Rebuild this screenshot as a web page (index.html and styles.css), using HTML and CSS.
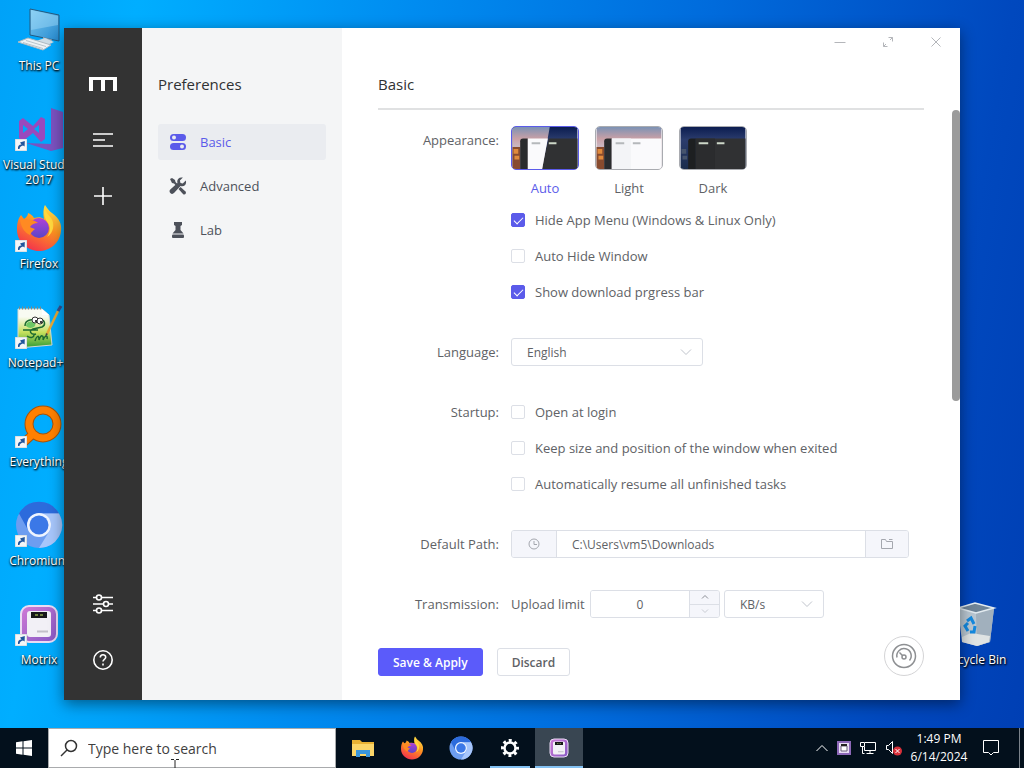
FILE: index.html
```html
<!doctype html>
<html lang="en">
  <head>
    <meta charset="UTF-8" />
    <meta name="viewport" content="width=device-width, initial-scale=1.0" />
    <title>Motrix - Preferences</title>
    <link rel="stylesheet" href="styles.css">
  </head>
  <body>
    <!-- shared icons -->
    <svg class="sprite" width="0" height="0" aria-hidden="true">
      <defs>
        <linearGradient id="g-fox" x1="0.8" y1="0" x2="0.3" y2="1">
          <stop offset="0" stop-color="#ffe84a" />
          <stop offset="0.45" stop-color="#ff9420" />
          <stop offset="1" stop-color="#f2304e" />
        </linearGradient>
        <linearGradient id="g-globe" x1="0" y1="0" x2="0" y2="1">
          <stop offset="0" stop-color="#b040d8" />
          <stop offset="1" stop-color="#5a45c8" />
        </linearGradient>
        <linearGradient id="g-screen" x1="0" y1="0" x2="1" y2="1">
          <stop offset="0" stop-color="#7ccaf2" />
          <stop offset="1" stop-color="#2489cf" />
        </linearGradient>
        <linearGradient id="g-motrix" x1="0" y1="0" x2="1" y2="1">
          <stop offset="0" stop-color="#d17ad6" />
          <stop offset="1" stop-color="#8558c4" />
        </linearGradient>
        <linearGradient id="g-note" x1="0" y1="0" x2="0" y2="1">
          <stop offset="0.2" stop-color="#f8fbf2" />
          <stop offset="0.6" stop-color="#c5e05c" />
          <stop offset="1" stop-color="#2e9a35" />
        </linearGradient>
        <linearGradient id="g-day" x1="0" y1="0" x2="0" y2="1">
          <stop offset="0" stop-color="#7c92b4" />
          <stop offset="0.28" stop-color="#c9a0a6" />
          <stop offset="0.45" stop-color="#cbb6c0" />
          <stop offset="0.6" stop-color="#b8a9b4" />
        </linearGradient>
        <linearGradient id="g-night" x1="0" y1="0" x2="0" y2="1">
          <stop offset="0" stop-color="#0c1d50" />
          <stop offset="0.3" stop-color="#2b3c6d" />
          <stop offset="1" stop-color="#1a2c4c" />
        </linearGradient>
      </defs>
      <symbol id="shortcut" viewBox="0 0 12 12">
        <rect width="12" height="12" fill="#f4f6f8" stroke="#c5ccd2" />
        <path d="M3 10C2.500 7 4 5.500 6.500 5.500L5 3.500 9.800 2 9.600 7.500 8 6.500C6 7 4.500 8 4.500 10Z" fill="#21559c" />
      </symbol>
      <symbol id="firefox" viewBox="0 0 48 48">
        <path d="M30 1c3 4 4 6 7 8 7 5 10 11 9 18-1 12-11 20-22 20S2 38 2 26C2 19 3 15 6 11l3 4c3-2 4-4 4-6 3 1 5 3 6 5 4-1 7-1 10 1-1-5-1-10 1-14z" fill="url(#g-fox)" />
        <circle cx="24" cy="24" r="10" fill="url(#g-globe)" />
        <path d="M5 13c5 4 12 1 18 6-4 0-7 2-8 4 1 1 3 1 5 2-2 2-4 3-5 6-5-2-10-8-10-18z" fill="#ff8a22" />
        <path d="M30 1c-2 7-1 13 3 18 3 4 2 10-1 14 7-4 8-14 4-19-3-4-6-6-6-13z" fill="#ffd83e" />
      </symbol>
      <symbol id="chromium" viewBox="0 0 48 48">
        <circle cx="24" cy="24" r="23" fill="#6d9df0" />
        <path d="M4 12.500A23 23 0 0 1 44 12.500H24A12 12 0 0 0 13.600 30z" fill="#2c6bdc" />
        <path d="M44 12.500A23 23 0 0 1 24 47l10.500-17A12 12 0 0 0 24 12.500z" fill="#a7c6fb" />
        <circle cx="24" cy="24" r="12" fill="#eef4ff" />
        <circle cx="24" cy="24" r="9.500" fill="#3b78e7" />
      </symbol>
      <symbol id="motrix" viewBox="0 0 48 48">
        <rect x="6" y="6" width="36" height="36" rx="8" fill="url(#g-motrix)" stroke="#eadcf4" stroke-width="2" />
        <rect x="12" y="11" width="24" height="26" rx="3" fill="#f2f0f6" />
        <rect x="16" y="12" width="16" height="6" fill="#17181a" />
        <path d="M20 15h3M25 15h3" stroke="#8ca24a" stroke-width="1.500" />
        <path d="M22 31.500h11" stroke="#c2bfc9" stroke-width="2" />
      </symbol>
      <symbol id="chevron-down" viewBox="0 0 12 12">
        <path d="M1 3.500l5 5 5-5" fill="none" stroke="#c0c4cc" />
      </symbol>
    </svg>

    <div class="desktop">
      <div class="shortcut">
        <svg class="shortcut-icon" viewBox="0 0 48 48">
          <path d="M15 3l29 6v26l-29-6z" fill="url(#g-screen)" stroke="#24597f" />
          <path d="M16 4l27 6v9L16 24z" fill="#a5dbf8" opacity="0.45" />
          <path d="M28 31l9 2.500v4l-9-2z" fill="#8aa5b8" />
          <path d="M21 35l9-3 9 4-9 4z" fill="#cfdde6" />
          <path d="M3 36l10-4 23 7-8 5z" fill="#eef2f5" stroke="#aebac2" />
          <path d="M8 36.500l20 6M11 34.500l20 6" stroke="#b9c4cb" />
        </svg>
        <span>This PC</span>
      </div>
      <div class="shortcut">
        <svg class="shortcut-icon" viewBox="0 0 48 48">
          <path d="M36 3l12 4v36l-12 3-25-8 25 1z" fill="#7b52c0" />
          <path d="M4 16l4-3 10 8 8-9 4 2v20l-4 3-8-9-10 8-4-3zm4 4v8l5-4zm16 0l-5 4 5 4z" fill="#9a49bd" fill-rule="evenodd" />
          <use href="#shortcut" y="34" width="12" height="12" />
        </svg>
        <span>Visual Studio 2017</span>
      </div>
      <div class="shortcut">
        <svg class="shortcut-icon" viewBox="0 0 48 48">
          <use href="#firefox" width="48" height="48" />
          <use href="#shortcut" y="36" width="12" height="12" />
        </svg>
        <span>Firefox</span>
      </div>
      <div class="shortcut">
        <svg class="shortcut-icon" viewBox="0 0 48 48">
          <path d="M3 6h24l7 6 3 30-34 3z" fill="url(#g-note)" stroke="#d5dad2" />
          <path d="M4 5h23" stroke="#7f8a88" stroke-width="3" stroke-dasharray="1 2" />
          <path d="M27 6v6h7z" fill="#fff" />
          <path d="M10 23c0-6 7-8 12-4l4-2c4 0 5 5 1 7l-9 2c-5 2-2 6 3 5M8 27h15M12 33c4 3 7 1 7-1M20 38c2-6 4-6 4-1 2-6 5-5 4 0 2-5 5-5 4-1" fill="none" stroke="#1c6a30" stroke-width="1.500" />
          <path d="M11 23c0-4 5-6 9-3 2 4-5 7-9 3z" fill="#6cc865" />
          <circle cx="20" cy="17" r="3" fill="#fff" stroke="#333" />
          <circle cx="25" cy="18" r="3" fill="#fff" stroke="#333" />
          <circle cx="21" cy="18" r="1" /><circle cx="26" cy="19" r="1" />
          <path d="M32 31l11-23" stroke="#e6a735" stroke-width="2.500" />
          <path d="M43 8l3-5" stroke="#3b4f8c" stroke-width="3" />
          <path d="M30 34l1-4 2 1z" fill="#444" />
          <use href="#shortcut" y="34" width="12" height="12" />
        </svg>
        <span>Notepad++</span>
      </div>
      <div class="shortcut">
        <svg class="shortcut-icon" viewBox="0 0 48 48">
          <path d="M17 33L6 43" stroke="#a6530a" stroke-width="9" />
          <circle cx="28" cy="22" r="14" fill="none" stroke="#a6530a" stroke-width="9" />
          <path d="M18 32L6 43" stroke="#ff8000" stroke-width="7" />
          <circle cx="28" cy="22" r="14" fill="none" stroke="#ff8000" stroke-width="7" />
          <use href="#shortcut" y="34" width="12" height="12" />
        </svg>
        <span>Everything</span>
      </div>
      <div class="shortcut">
        <svg class="shortcut-icon" viewBox="0 0 48 48">
          <use href="#chromium" width="48" height="48" />
          <use href="#shortcut" y="34" width="12" height="12" />
        </svg>
        <span>Chromium</span>
      </div>
      <div class="shortcut">
        <svg class="shortcut-icon" viewBox="0 0 48 48">
          <use href="#motrix" width="48" height="48" />
          <use href="#shortcut" y="34" width="12" height="12" />
        </svg>
        <span>Motrix</span>
      </div>
      <div class="shortcut recycle">
        <svg class="shortcut-icon" viewBox="0 0 48 48">
          <path d="M7 8l17-5 19 5-4 34-13 4-15-4z" fill="#b9c7d2" />
          <path d="M25 13l18-5-4 34-13 4z" fill="#a1b0bd" />
          <path d="M7 8l17-5 19 5-18 5z" fill="#6f8497" stroke="#e3ebf0" stroke-width="1.500" />
          <path d="M11 37l9-4 19 3-1 6-12 4-15-4z" fill="#dfe3e3" />
          <path d="M16 21l4-3 3 6M24 26l-1 6h-4M17 31l-3-5 3-3" fill="none" stroke="#1489df" stroke-width="3" />
        </svg>
        <span>Recycle Bin</span>
      </div>

      <main class="window">
        <nav class="aside" aria-label="Main">
          <svg class="logo" width="28" height="14" viewBox="0 0 28 14"><path d="M0 0h28v14h-4V3h-8v11h-4V3H4v11H0z" fill="#fff" /></svg>
          <button class="aside-btn" aria-label="Tasks">
            <svg width="24" height="24" viewBox="0 0 24 24"><path d="M2 6h20M2 12h12M2 18h20" /></svg>
          </button>
          <button class="aside-btn" aria-label="Add task">
            <svg width="24" height="24" viewBox="0 0 24 24"><path d="M3 12h18M12 3v18" /></svg>
          </button>
          <div class="aside-bottom">
            <button class="aside-btn" aria-label="Preferences">
              <svg width="24" height="24" viewBox="0 0 24 24"><path d="M2 5.500h3M11 5.500h11M2 12h10M18 12h4M2 18.500h3M11 18.500h11" /><circle cx="8" cy="5.500" r="2.500" /><circle cx="15" cy="12" r="2.500" /><circle cx="8" cy="18.500" r="2.500" /></svg>
            </button>
            <button class="aside-btn" aria-label="Help">
              <svg width="24" height="24" viewBox="0 0 24 24"><circle cx="12" cy="12" r="9.200" /><path d="M9.300 9.500c0-3.600 5.400-3.600 5.400-.2 0 2-2.700 2-2.700 4.200M12 15.500v2" /></svg>
            </button>
          </div>
        </nav>

        <section class="subnav">
          <h2>Preferences</h2>
          <ul>
            <li>
              <a href="#basic" class="active">
                <svg width="20" height="20" viewBox="0 0 20 20"><rect x="2" y="2" width="16" height="7" rx="3.500" /><rect x="2" y="11" width="16" height="7" rx="3.500" /><circle class="knob" cx="6" cy="5.500" r="2" /><circle class="knob" cx="14" cy="14.500" r="2" /></svg>
                Basic
              </a>
            </li>
            <li>
              <a href="#advanced">
                <svg width="20" height="20" viewBox="0 0 20 20"><path d="M2 3l2-1 3 2 .5 2L11 9.500 9.500 11 6 7.500 4 7z" /><path d="M12.500 11l5 4.500c1.500 2-1 4-2.500 2.500L10.500 13z" /><path d="M17.800 4.500l-3 3-2.300-.6-.6-2.300 3-3c-4-1-6.500 2-5.400 5.400l-7.200 6.500c-2.400 2.500 1.400 6 3.700 3.600L12.500 10c3.500 1.200 6.500-1.600 5.300-5.500z" /></svg>
                Advanced
              </a>
            </li>
            <li>
              <a href="#lab">
                <svg width="20" height="20" viewBox="0 0 20 20"><path d="M6 2h8v3l-1.500 1v4l3 3.500h-11l3-3.500V6L6 5z" /><rect x="4" y="14.500" width="12" height="3.500" rx="1" /></svg>
                Lab
              </a>
            </li>
          </ul>
        </section>

        <section class="content">
          <div class="window-controls">
            <button aria-label="Minimize"><svg width="12" height="12" viewBox="0 0 12 12"><path d="M.5 6.500h11" /></svg></button>
            <button aria-label="Maximize"><svg width="12" height="12" viewBox="0 0 12 12"><path d="M6.500 1.500h4v4M5.500 10.500h-4v-4M10.500 1.500L8 4M1.500 10.500L4 8" /></svg></button>
            <button aria-label="Close"><svg width="12" height="12" viewBox="0 0 12 12"><path d="M1.500 1.500l9 9M10.500 1.500l-9 9" /></svg></button>
          </div>
          <header>
            <h1>Basic</h1>
          </header>

          <form class="form">
            <div class="form-item">
              <span class="form-label">Appearance:</span>
              <div class="form-content">
                <div class="themes">
                  <button type="button" class="theme active">
                    <svg width="68" height="44" viewBox="0 0 68 44">
                      <rect width="68" height="44" fill="url(#g-night)" />
                      <path d="M38 12h30v32H30z" fill="#303133" />
                      <path d="M0 0h39L31 44H0z" fill="url(#g-day)" />
                      <path d="M0 21h8v23H0z" fill="#884b2e" /><path d="M1 23h5v5H1zM2 30h5v4H2z" fill="#e08a3c" />
                      <path d="M8 15a3 3 0 0 1 3-3h5v32H8z" fill="#2a2c2e" />
                      <path d="M16 12h21l-6 32H16z" fill="#fafafc" />
                      <path d="M20 17h9" stroke="#b5b8bb" stroke-width="2" /><path d="M38 17h8" stroke="#cdd8c9" stroke-width="2" />
                    </svg>
                    <span>Auto</span>
                  </button>
                  <button type="button" class="theme">
                    <svg width="68" height="44" viewBox="0 0 68 44">
                      <rect width="68" height="44" fill="url(#g-day)" />
                      <path d="M0 21h8v23H0z" fill="#884b2e" /><path d="M1 23h5v5H1zM2 30h5v4H2z" fill="#e08a3c" />
                      <path d="M8 15a3 3 0 0 1 3-3h5v32H8z" fill="#2a2c2e" />
                      <path d="M16 12h52v32H16z" fill="#fafafc" /><path d="M16 12h20v32H16z" fill="#f3f4f7" />
                      <path d="M20 17h9M38 17h8" stroke="#b5b8bb" stroke-width="2" />
                    </svg>
                    <span>Light</span>
                  </button>
                  <button type="button" class="theme">
                    <svg width="68" height="44" viewBox="0 0 68 44">
                      <rect width="68" height="44" fill="url(#g-night)" />
                      <path d="M1 23h5v5H1zM2 30h5v4H2z" fill="#46546d" />
                      <path d="M8 15a3 3 0 0 1 3-3h5v32H8z" fill="#1d1f21" />
                      <path d="M16 12h52v32H16z" fill="#303133" /><path d="M16 12h20v32H16z" fill="#2b2c2e" />
                      <path d="M19 17h10M38 17h8" stroke="#cdd8c9" stroke-width="2" />
                    </svg>
                    <span>Dark</span>
                  </button>
                </div>
                <label class="check"><input type="checkbox" checked> Hide App Menu (Windows &amp; Linux Only)</label>
                <label class="check"><input type="checkbox"> Auto Hide Window</label>
                <label class="check"><input type="checkbox" checked> Show download prgress bar</label>
              </div>
            </div>

            <div class="form-item">
              <label class="form-label" for="language">Language:</label>
              <div class="form-content">
                <div class="row">
                  <div class="select language">
                    <select id="language"><option>English</option></select>
                    <svg width="12" height="12"><use href="#chevron-down" /></svg>
                  </div>
                </div>
              </div>
            </div>

            <div class="form-item">
              <span class="form-label">Startup:</span>
              <div class="form-content">
                <label class="check"><input type="checkbox"> Open at login</label>
                <label class="check"><input type="checkbox"> Keep size and position of the window when exited</label>
                <label class="check"><input type="checkbox"> Automatically resume all unfinished tasks</label>
              </div>
            </div>

            <div class="form-item">
              <label class="form-label" for="path">Default Path:</label>
              <div class="form-content">
                <div class="row">
                  <div class="input-group">
                    <button type="button" class="prepend" aria-label="History"><svg width="12" height="12" viewBox="0 0 12 12"><circle cx="6" cy="6" r="5" /><path d="M6 3v3.500h3" /></svg></button>
                    <input id="path" type="text" value="C:\Users\vm5\Downloads">
                    <button type="button" class="append" aria-label="Choose folder"><svg width="12" height="12" viewBox="0 0 12 12"><path d="M.5 10.500v-9h4l1 2h6v7zM8 1.500h3.500" /></svg></button>
                  </div>
                </div>
              </div>
            </div>

            <div class="form-item">
              <span class="form-label">Transmission:</span>
              <div class="form-content">
                <div class="row">
                  <label class="limit-label" for="upload">Upload limit</label>
                  <div class="stepper">
                    <input id="upload" type="text" inputmode="numeric" value="0">
                    <div class="stepper-btns">
                      <button type="button" aria-label="Increase"><svg width="8" height="6" viewBox="0 0 8 6"><path d="M1 4.500l3-3 3 3" /></svg></button>
                      <button type="button" aria-label="Decrease" disabled><svg width="8" height="6" viewBox="0 0 8 6"><path d="M1 1.500l3 3 3-3" /></svg></button>
                    </div>
                  </div>
                  <div class="select unit">
                    <select aria-label="Unit"><option>KB/s</option></select>
                    <svg width="12" height="12"><use href="#chevron-down" /></svg>
                  </div>
                </div>
              </div>
            </div>
          </form>

          <footer>
            <button class="btn btn-primary">Save &amp; Apply</button>
            <button class="btn">Discard</button>
            <button class="speedometer" aria-label="Speed">
              <svg width="26" height="26" viewBox="0 0 26 26"><circle cx="13" cy="13" r="11.500" /><path d="M6 14.500a7.200 7.200 0 1 1 12.500 3" /><circle cx="13" cy="14" r="2" /><path d="M11.500 12.500L8.500 9.500" /></svg>
            </button>
          </footer>
          <div class="scrollbar"></div>
        </section>
      </main>
    </div>

    <div class="taskbar">
      <button class="start" aria-label="Start">
        <svg width="16" height="16" viewBox="0 0 16 16"><path d="M0 2.200L6.500 1.300v6.200H0zM7.500 1.200L16 0v7.500H7.500zM0 8.500h6.500v6.200L0 13.800zM7.500 8.500H16V16l-8.500-1.200z" fill="#fff" /></svg>
      </button>
      <div class="search">
        <svg width="18" height="18" viewBox="0 0 18 18"><circle cx="11" cy="7" r="5.500" /><path d="M7 11l-6 6" /></svg>
        <input type="text" placeholder="Type here to search" aria-label="Search">
      </div>
      <div class="apps">
        <button aria-label="File Explorer">
          <svg width="24" height="24" viewBox="0 0 24 24"><path d="M1 4h8l2 2h12v14H1z" fill="#e9b234" /><path d="M1 8h22v12H1z" fill="#fcd669" /><path d="M5 21v-7h14v7h-4v-3H9v3z" fill="#3a96dc" /></svg>
        </button>
        <button aria-label="Firefox"><svg width="24" height="24"><use href="#firefox" /></svg></button>
        <button aria-label="Chromium"><svg width="24" height="24"><use href="#chromium" /></svg></button>
        <button aria-label="Settings" class="running">
          <svg width="20" height="20" viewBox="0 0 20 20"><circle cx="10" cy="10" r="5.500" fill="none" stroke="#fff" stroke-width="2.500" /><circle cx="10" cy="10" r="7.500" fill="none" stroke="#fff" stroke-width="3" stroke-dasharray="2.945 2.945" stroke-dashoffset="1.470" /></svg>
        </button>
        <button aria-label="Motrix" class="running current"><svg width="24" height="24"><use href="#motrix" /></svg></button>
      </div>
      <div class="tray">
        <button aria-label="Show hidden icons"><svg width="14" height="14" viewBox="0 0 14 14"><path d="M1.500 10L7 4.500l5.500 5.500" /></svg></button>
        <button aria-label="Motrix"><svg width="14" height="14" viewBox="0 0 14 14"><rect x="1" y="1" width="12" height="12" fill="#e9def5" stroke="#8d68b8" stroke-width="2" /><path d="M4 5h6v5H4z" fill="#fff" stroke="#6b6078" /><path d="M4 4h6" stroke="#222" stroke-width="2" /></svg></button>
        <button aria-label="Network"><svg width="18" height="16" viewBox="0 0 18 16"><path d="M6 2.500h10.500v8H5.500V7M1.500 2.500h4v4h-4zM3.500 6.500v7h2M11 10.500v3M7.500 13.500h7" /></svg></button>
        <button aria-label="Volume"><svg width="18" height="16" viewBox="0 0 18 16"><path d="M1.500 5.500h2l4-4v12l-4-4h-2z" /><circle cx="12.500" cy="11" r="4.500" fill="#d9303a" stroke="none" /><path d="M10.500 9l4 4M14.500 9l-4 4" /></svg></button>
      </div>
      <div class="clock"><span>1:49 PM</span><span>6/14/2024</span></div>
      <button class="notifications" aria-label="Notifications">
        <svg width="18" height="18" viewBox="0 0 18 18"><path d="M1.500 1.500h15v12h-5L9 16l-2.500-2.500h-5z" /></svg>
      </button>
      <div class="show-desktop"></div>
      <svg class="cursor" width="8" height="10" viewBox="0 0 8 10"><path d="M0 1.500h3M5 1.500h3M4 2v8" stroke="#222" /></svg>
    </div>
  </body>
</html>
```
FILE: styles.css
```css
* {
  box-sizing: border-box;
}
body {
  margin: 0;
  min-height: 100vh;
  display: flex;
  flex-direction: column;
  overflow: hidden;
  font-family: "Segoe UI", "Open Sans", "Noto Sans", sans-serif;
  font-size: 13px;
  color: #606266;
}
button, input, select {
  font-family: inherit;
  margin: 0;
}
button {
  padding: 0;
  border: none;
  background: none;
  color: inherit;
  cursor: pointer;
}
svg {
  display: block;
  flex-shrink: 0;
}
.sprite {
  position: absolute;
}

/* desktop */
.desktop {
  position: relative;
  flex: 1;
  display: grid;
  grid-template-columns: 78px 78px;
  grid-template-rows: repeat(7, 99px);
  grid-auto-flow: column;
  justify-content: space-between;
  padding-right: 10px;
  background: linear-gradient(100deg, #00a2f8 0%, #00aeff 12%, #008cf0 36%, #006bdc 62%, #0048be 88%, #003fb4 100%);
}
.shortcut {
  display: flex;
  flex-direction: column;
  align-items: center;
  gap: 4px;
  padding-top: 6px;
  font-size: 12px;
  line-height: 15px;
  text-align: center;
  color: #fff;
  text-shadow: 0 1px 2px #000, 1px 1px 2px #000;
}
.shortcut-icon {
  width: 48px;
  height: 48px;
}
.recycle {
  grid-row: 7;
}

/* window */
.window {
  position: absolute;
  inset: 28px 64px;
  display: flex;
  background: #fff;
  box-shadow: 0 4px 14px rgba(0, 0, 0, 0.45);
}
.aside {
  width: 78px;
  display: flex;
  flex-direction: column;
  align-items: center;
  padding: 49px 0 28px;
  background: #333;
}
.logo {
  margin-bottom: 37px;
}
.aside-btn {
  width: 24px;
  height: 24px;
  margin-bottom: 32px;
}
.aside-btn svg {
  fill: none;
  stroke: #fff;
  stroke-width: 1.6;
}
.aside-bottom {
  margin-top: auto;
}
.aside-bottom .aside-btn {
  display: block;
}
.aside-bottom .aside-btn:last-child {
  margin-bottom: 0;
}

.subnav {
  width: 200px;
  padding: 44px 16px;
  background: #f4f5f6;
}
h1, h2 {
  margin: 0;
  font-size: 15px;
  font-weight: 400;
  line-height: 24px;
  color: #303133;
}
.subnav ul {
  list-style: none;
  margin: 28px 0 0;
  padding: 0;
  display: flex;
  flex-direction: column;
  gap: 8px;
}
.subnav a {
  display: flex;
  align-items: center;
  gap: 12px;
  height: 36px;
  padding: 0 10px;
  border-radius: 3px;
  color: #4d515a;
  text-decoration: none;
}
.subnav a svg {
  fill: #4d515a;
}
.subnav a.active {
  background: #eaecf0;
  color: #5b5bea;
}
.subnav a.active svg {
  fill: #5b5bea;
}
.subnav .knob {
  fill: #eaecf0;
}

.content {
  position: relative;
  flex: 1;
  display: flex;
  flex-direction: column;
  padding: 44px 36px 24px;
}
.content header {
  padding-bottom: 12px;
  border-bottom: 2px solid #e0e1e2;
}
.window-controls {
  position: absolute;
  top: 0;
  right: 0;
  display: flex;
}
.window-controls button {
  width: 48px;
  height: 28px;
  display: flex;
  align-items: center;
  justify-content: center;
}
.window-controls svg {
  fill: none;
  stroke: #b4b6ba;
}

/* form */
.form {
  flex: 1;
  display: flex;
  flex-direction: column;
  gap: 24px;
  padding-top: 12px;
  line-height: 36px;
}
.form-item {
  display: flex;
}
.form-label {
  width: 133px;
  padding-right: 12px;
  text-align: right;
}
.form-content {
  flex: 1;
}
.themes {
  display: flex;
  gap: 16px;
  padding: 4px 0 2px;
}
.theme {
  font-size: 13px;
  line-height: 24px;
}
.theme svg {
  margin-bottom: 6px;
  border: 1px solid #a9abb0;
  border-radius: 5px;
}
.theme.active {
  color: #5b5bea;
}
.theme.active svg {
  border-color: #5b5bea;
}
.check {
  display: flex;
  align-items: center;
  gap: 10px;
}
.check input {
  appearance: none;
  width: 14px;
  height: 14px;
  display: grid;
  place-items: center;
  border: 1px solid #dcdfe6;
  border-radius: 2px;
  background: #fff;
}
.check input:checked {
  border-color: #5b5bea;
  background: #5b5bea;
}
.check input:checked::after {
  content: "";
  width: 8px;
  height: 4px;
  border: solid #fff;
  border-width: 0 0 1px 1px;
  transform: translateY(-1px) rotate(-45deg);
}
.row {
  display: flex;
  align-items: center;
  gap: 4px;
  height: 36px;
}
.select {
  position: relative;
}
.select select {
  appearance: none;
  display: block;
  width: 100%;
  height: 28px;
  padding: 0 15px;
  border: 1px solid #dcdfe6;
  border-radius: 3px;
  background: #fff;
  color: #606266;
  font-size: 12px;
}
.select svg {
  position: absolute;
  top: 8px;
  right: 11px;
  pointer-events: none;
}
.language {
  width: 192px;
}
.unit {
  width: 100px;
}
.input-group {
  display: flex;
  width: 398px;
  height: 28px;
  border: 1px solid #dcdfe6;
  border-radius: 3px;
  overflow: hidden;
}
.input-group input {
  flex: 1;
  min-width: 0;
  padding: 0 15px;
  border: none;
  color: #606266;
  font-size: 12px;
}
.input-group button {
  display: flex;
  align-items: center;
  justify-content: center;
  background: #f5f6fb;
}
.input-group button svg {
  fill: none;
  stroke: #a4a7ae;
}
.input-group .prepend {
  width: 45px;
  border-right: 1px solid #dcdfe6;
}
.input-group .append {
  width: 43px;
  border-left: 1px solid #dcdfe6;
}
.limit-label {
  min-width: 75px;
}
.stepper {
  display: flex;
  width: 130px;
  height: 28px;
  border: 1px solid #dcdfe6;
  border-radius: 3px;
  overflow: hidden;
}
.stepper input {
  flex: 1;
  min-width: 0;
  padding: 0;
  border: none;
  text-align: center;
  color: #606266;
  font-size: 12px;
}
.stepper-btns {
  width: 30px;
  display: flex;
  flex-direction: column;
  border-left: 1px solid #dcdfe6;
}
.stepper-btns button {
  flex: 1;
  display: flex;
  align-items: center;
  justify-content: center;
  background: #f5f6fb;
}
.stepper-btns button + button {
  border-top: 1px solid #dcdfe6;
}
.stepper-btns svg {
  fill: none;
  stroke: #8a8d94;
}
.stepper-btns button:disabled svg {
  stroke: #c8cbd2;
}

.content footer {
  display: flex;
  align-items: flex-end;
  gap: 14px;
}
.btn {
  height: 28px;
  padding: 0 14px;
  border: 1px solid #dcdfe6;
  border-radius: 3px;
  background: #fff;
  color: #606266;
  font-size: 12px;
  font-weight: 600;
}
.btn-primary {
  border-color: #5b5bfa;
  background: #5b5bfa;
  color: #fff;
}
.speedometer {
  width: 40px;
  height: 40px;
  display: flex;
  align-items: center;
  justify-content: center;
  margin-left: auto;
  border: 1px solid #d4d4d6;
  border-radius: 50%;
  background: #fff;
}
.speedometer svg {
  fill: none;
  stroke: #8d8f92;
  stroke-width: 1.5;
}
.scrollbar {
  position: absolute;
  top: 82px;
  right: 0;
  width: 8px;
  height: 291px;
  border-radius: 4px;
  background: #9b9b9b;
}

/* taskbar */
.taskbar {
  position: relative;
  display: flex;
  height: 40px;
  background: #03101c;
  color: #fff;
}
.start {
  width: 48px;
  display: flex;
  align-items: center;
  justify-content: center;
}
.search {
  width: 288px;
  display: flex;
  align-items: center;
  gap: 10px;
  padding-left: 11px;
  border: 1px solid #a9abad;
  background: #fff;
}
.search svg {
  fill: none;
  stroke: #333;
  stroke-width: 1.5;
}
.search input {
  flex: 1;
  min-width: 0;
  padding: 0;
  border: none;
  font-size: 14px;
}
.search input::placeholder {
  color: #3f3f3f;
  opacity: 1;
}
.apps {
  display: flex;
  gap: 1px;
  margin-left: 3px;
}
.apps button {
  width: 48px;
  display: flex;
  align-items: center;
  justify-content: center;
}
.apps .running {
  background: linear-gradient(#83c1f2, #83c1f2) bottom / 40px 2px no-repeat;
}
.apps .current {
  background-color: #394652;
  background-size: 48px 2px;
}
.tray {
  display: flex;
  align-items: center;
  gap: 8px;
  margin-left: auto;
}
.tray svg, .notifications svg {
  fill: none;
  stroke: #fff;
}
.clock {
  width: 72px;
  display: flex;
  flex-direction: column;
  justify-content: center;
  text-align: center;
  font-size: 12px;
  line-height: 18px;
}
.notifications {
  width: 32px;
  display: flex;
  align-items: center;
  justify-content: center;
}
.show-desktop {
  width: 5px;
  margin-left: 12px;
  border-left: 1px solid #7b838b;
}
.cursor {
  position: absolute;
  left: 171px;
  bottom: 0;
}
```
